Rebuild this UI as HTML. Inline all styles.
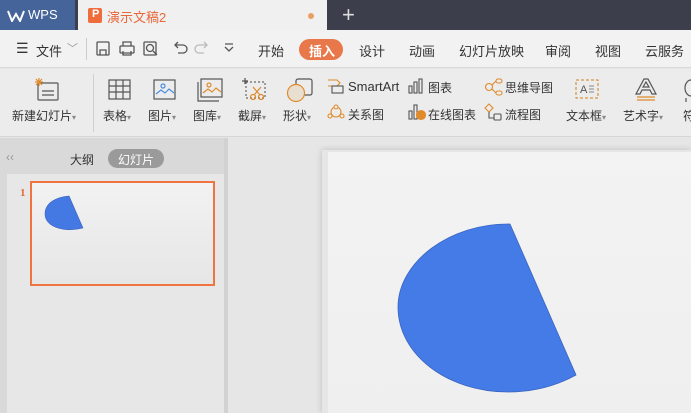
<!DOCTYPE html>
<html><head><meta charset="utf-8"><style>
*{margin:0;padding:0;box-sizing:border-box}
body{width:691px;height:413px;overflow:hidden;background:#e6e6e6;font-family:"Liberation Sans","Noto Sans CJK SC",sans-serif;position:relative;font-size:12px;color:#333}
.a{position:absolute}
.t{position:absolute;white-space:nowrap}
</style></head><body>
<!-- title bar -->
<div class="a" style="left:0;top:0;width:691px;height:30px;background:#3c3f4b"></div>
<div class="a" style="left:0;top:0;width:75px;height:30px;background:#45649a"></div>
<svg class="a" style="left:7px;top:10px" width="18" height="12"><path d="M1 1 L5 11 L9 4 L13 11 L17 1" fill="none" stroke="#fff" stroke-width="2"/></svg>
<div class="t" style="left:28px;top:7px;color:#fff;font-size:13px">WPS</div>
<div class="a" style="left:78px;top:0;width:249px;height:30px;background:#f0f0f0"></div>
<div class="a" style="left:88px;top:8px;width:14px;height:15px;background:#ef6d3b;border-radius:2px"></div>
<div class="t" style="left:92px;top:8px;color:#fff;font-size:11px;font-weight:bold">P</div>
<div class="t" style="left:107px;top:7px;color:#e8683a;font-size:13px">演示文稿2</div>
<div class="a" style="left:308px;top:13px;width:6px;height:6px;border-radius:50%;background:#e8a060"></div>
<div class="t" style="left:342px;top:2px;color:#ddd;font-size:22px;font-weight:300">+</div>
<!-- menu -->
<div class="a" style="left:0;top:30px;width:691px;height:38px;background:#f2f2f2;border-bottom:1px solid #d8d8d8"></div>
<div class="t" style="left:16px;top:40px;font-size:14px">☰</div>
<div class="t" style="left:36px;top:41px;font-size:13px">文件</div>
<div class="t" style="left:67px;top:40px;color:#999;font-size:11px">﹀</div>
<div class="a" style="left:86px;top:38px;width:1px;height:22px;background:#ccc"></div>
<svg class="a" style="left:95px;top:40px" width="140" height="18" fill="none" stroke="#555" stroke-width="1.3">
<rect x="2" y="2" width="12" height="13" rx="1"/><path d="M5 15 V10 H11 V15"/>
<rect x="25" y="6" width="14" height="7" rx="1"/><path d="M28 6 V2 H36 V6 M28 11 V15 H36 V11"/>
<rect x="49" y="2" width="12" height="13" rx="1"/><circle cx="55" cy="8" r="3.5"/><path d="M58 11 L62 15"/>
<path d="M80 5 H88 A4 4 0 0 1 88 13 H83 M83 2 L80 5 L83 8"/>
<path d="M112 5 H104 A4 4 0 0 0 104 13 H109 M109 2 L112 5 L109 8" stroke="#bbb"/>
<path d="M130 7 L134 11 L138 7 M130 4 H138"/>
</svg>
<div class="t" style="left:258px;top:41px;font-size:13px">开始</div>
<div class="a" style="left:299px;top:39px;width:44px;height:21px;border-radius:11px;background:#e8774a"></div>
<div class="t" style="left:309px;top:41px;font-size:13px;color:#fff;font-weight:bold">插入</div>
<div class="t" style="left:359px;top:41px;font-size:13px">设计</div>
<div class="t" style="left:409px;top:41px;font-size:13px">动画</div>
<div class="t" style="left:459px;top:41px;font-size:13px">幻灯片放映</div>
<div class="t" style="left:545px;top:41px;font-size:13px">审阅</div>
<div class="t" style="left:595px;top:41px;font-size:13px">视图</div>
<div class="t" style="left:645px;top:41px;font-size:13px">云服务</div>
<!-- toolbar -->
<div class="a" style="left:0;top:69px;width:691px;height:68px;background:#ececec;border-bottom:1px solid #d6d6d6"></div>
<svg class="a" style="left:34px;top:78px" width="28" height="24" fill="none" stroke="#555" stroke-width="1.2"><rect x="4" y="5" width="20" height="17" rx="1"/><path d="M8 13 H20 M8 17 H20" /><path d="M2 1 L8 7 M8 1 L2 7 M5 0 V8 M1 4 H9" stroke="#e08a2a"/></svg>
<div class="t" style="left:12px;top:107px;font-size:12px">新建幻灯片<span style="color:#888;font-size:8px">▾</span></div>
<div class="a" style="left:93px;top:74px;width:1px;height:58px;background:#d0d0d0"></div>
<svg class="a" style="left:108px;top:79px" width="24" height="22" fill="none" stroke="#555" stroke-width="1.2"><rect x="1" y="1" width="21" height="19"/><path d="M1 7 H22 M1 13 H22 M8 1 V20 M15 1 V20"/></svg>
<div class="t" style="left:103px;top:107px">表格<span style="color:#888;font-size:8px">▾</span></div>
<svg class="a" style="left:153px;top:79px" width="24" height="22" fill="none" stroke="#555" stroke-width="1.2"><rect x="1" y="1" width="21" height="19"/><circle cx="10" cy="7" r="2" stroke="#4a8be0"/><path d="M3 15 L8 11 L12 14 L16 10 L21 14" stroke="#4a8be0"/></svg>
<div class="t" style="left:148px;top:107px">图片<span style="color:#888;font-size:8px">▾</span></div>
<svg class="a" style="left:197px;top:78px" width="26" height="24" fill="none" stroke="#555" stroke-width="1.2"><rect x="4" y="1" width="21" height="18"/><path d="M1 4 V23 H22"/><circle cx="12" cy="7" r="2" stroke="#e08a2a"/><path d="M6 15 L11 11 L15 14 L19 10 L24 14" stroke="#e08a2a"/></svg>
<div class="t" style="left:193px;top:107px">图库<span style="color:#888;font-size:8px">▾</span></div>
<svg class="a" style="left:241px;top:78px" width="26" height="24" fill="none" stroke-width="1.2"><path d="M5 4 H24 V20 H5 Z" stroke="#666" stroke-dasharray="2 2"/><path d="M1 3 H7 M4 0 V6" stroke="#555"/><circle cx="12" cy="19" r="2.5" stroke="#e08a2a"/><circle cx="20" cy="19" r="2.5" stroke="#e08a2a"/><path d="M13 17 L20 9 M19 17 L12 9" stroke="#e08a2a"/></svg>
<div class="t" style="left:238px;top:107px">截屏<span style="color:#888;font-size:8px">▾</span></div>
<svg class="a" style="left:286px;top:78px" width="28" height="26" stroke-width="1.2"><rect x="10" y="1" width="16" height="16" rx="2" fill="none" stroke="#555"/><circle cx="10" cy="15" r="8.5" fill="#e8dfd0" stroke="#e08a2a"/></svg>
<div class="t" style="left:283px;top:107px">形状<span style="color:#888;font-size:8px">▾</span></div>
<svg class="a" style="left:327px;top:78px" width="18" height="16" fill="none" stroke-width="1.1"><path d="M1 2 H10 L13 5 L10 8 H1" stroke="#e08a2a"/><rect x="5" y="8" width="11" height="7" stroke="#555"/></svg>
<div class="t" style="left:348px;top:79px;font-size:13px">SmartArt</div>
<svg class="a" style="left:327px;top:104px" width="18" height="16" fill="none" stroke="#e08a2a" stroke-width="1.1"><circle cx="9" cy="8" r="5"/><circle cx="9" cy="3" r="2" fill="#ececec"/><circle cx="3" cy="12" r="2" fill="#ececec"/><circle cx="15" cy="12" r="2" fill="#ececec"/></svg>
<div class="t" style="left:348px;top:106px">关系图</div>
<svg class="a" style="left:408px;top:78px" width="16" height="16" fill="none" stroke="#555" stroke-width="1.1"><rect x="1" y="8" width="3" height="7"/><rect x="6" y="4" width="3" height="11"/><rect x="11" y="1" width="3" height="14"/></svg>
<div class="t" style="left:428px;top:79px">图表</div>
<svg class="a" style="left:408px;top:103px" width="18" height="18" fill="none" stroke-width="1.1"><rect x="1" y="8" width="3" height="8" stroke="#555"/><rect x="6" y="2" width="3" height="14" stroke="#555"/><circle cx="13" cy="12" r="4.5" fill="#e08a2a" stroke="#e08a2a"/></svg>
<div class="t" style="left:428px;top:106px">在线图表</div>
<svg class="a" style="left:484px;top:78px" width="20" height="18" fill="none" stroke="#e08a2a" stroke-width="1.1"><circle cx="5" cy="9" r="3.5"/><rect x="12" y="1" width="6" height="4" rx="2"/><rect x="12" y="13" width="6" height="4" rx="2"/><path d="M8 7 L12 3 M8 11 L12 15"/></svg>
<div class="t" style="left:505px;top:79px">思维导图</div>
<svg class="a" style="left:484px;top:103px" width="20" height="18" fill="none" stroke-width="1.1"><path d="M5 1 L9 5 L5 9 L1 5 Z" stroke="#e08a2a"/><path d="M5 9 V15 H10" stroke="#555"/><rect x="10" y="11" width="7" height="6" rx="1" stroke="#555"/></svg>
<div class="t" style="left:505px;top:106px">流程图</div>
<svg class="a" style="left:575px;top:79px" width="26" height="22"><rect x="1" y="1" width="22" height="18" fill="none" stroke="#d08020" stroke-dasharray="3 2"/><text x="5" y="14" font-size="11" fill="#555" font-family="Liberation Sans">A</text><path d="M14 7 H19 M14 10 H19 M14 13 H19" stroke="#888"/></svg>
<div class="t" style="left:566px;top:107px">文本框<span style="color:#888;font-size:8px">▾</span></div>
<svg class="a" style="left:634px;top:78px" width="24" height="24" fill="none" stroke="#555" stroke-width="1.2"><path d="M2 16 L10 1 H14 L22 16 H18 L16 12 H8 L6 16 Z M9 9 H15 L12 4 Z"/><path d="M3 19 H21 M3 22 H21" stroke="#e08a2a"/></svg>
<div class="t" style="left:623px;top:107px">艺术字<span style="color:#888;font-size:8px">▾</span></div>
<div class="t" style="left:683px;top:107px">符</div>
<svg class="a" style="left:682px;top:78px" width="9" height="24" fill="none" stroke="#555" stroke-width="1.2"><path d="M9 2 A6 8 0 0 0 9 18 M4 20 V24"/></svg>
<!-- left panel -->
<div class="a" style="left:0;top:138px;width:224px;height:275px;background:#d9d9d9"></div>
<div class="a" style="left:7px;top:174px;width:217px;height:239px;background:#e7e7e7"></div>
<div class="a" style="left:224px;top:138px;width:4px;height:275px;background:#d2d2d2"></div>
<div class="t" style="left:6px;top:150px;color:#999;font-size:12px">‹‹</div>
<div class="t" style="left:70px;top:151px;font-size:12px">大纲</div>
<div class="a" style="left:108px;top:149px;width:56px;height:19px;border-radius:10px;background:#9a9a9a"></div>
<div class="t" style="left:118px;top:151px;font-size:12px;color:#fff">幻灯片</div>
<div class="t" style="left:20px;top:187px;color:#e8683a;font-size:11px;font-weight:bold;font-family:'Liberation Serif',serif">1</div>
<div class="a" style="left:30px;top:181px;width:185px;height:105px;border:2px solid #ef7440;background:linear-gradient(#f2f2f2,#e6e6e6)"></div>
<svg class="a" style="left:0;top:0" width="100" height="250"><path d="M69 196 C56 197 45 203 45 214 C45 226 62 233 83 228 Z" fill="#4479e4" stroke="#3a62b8" stroke-width=".6"/></svg>
<!-- slide -->
<div class="a" style="left:322px;top:150px;width:369px;height:263px;box-shadow:0 0 6px rgba(0,0,0,.18)"></div>
<div class="a" style="left:328px;top:152px;width:363px;height:261px;background:linear-gradient(#f3f3f3,#efefef)"></div>
<svg class="a" style="left:0;top:0" width="691" height="413"><path d="M510 224 C450 223 398 262 398 307 C398 355 448 392 508 392 C533 392 556 386 576 375 Z" fill="#447be6" stroke="#3a65c0" stroke-width=".8"/></svg>
</body></html>
